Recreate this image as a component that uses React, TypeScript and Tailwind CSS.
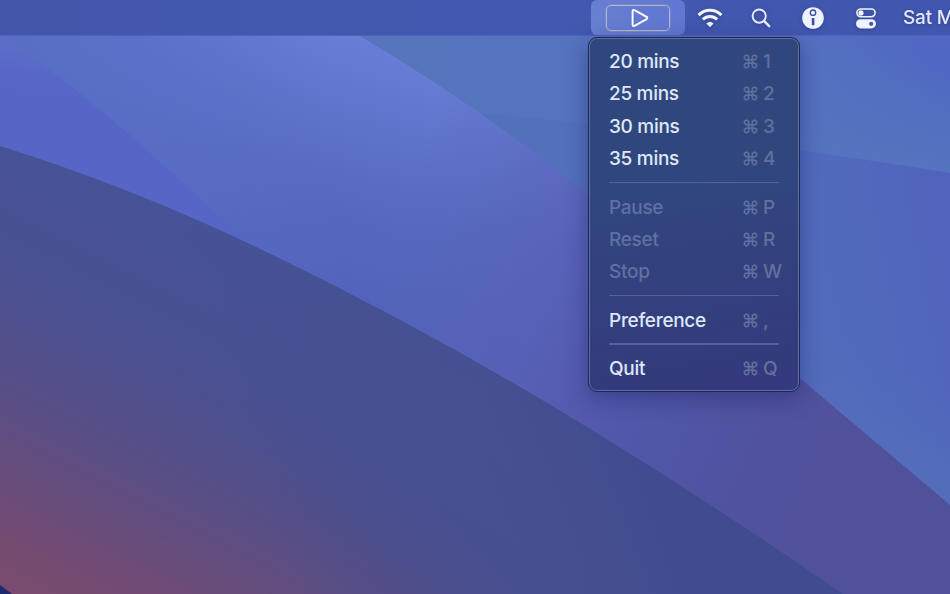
import React from "react";

type Item = { label: string; shortcut: string; disabled?: boolean };

const groups: Item[][] = [
  [
    { label: "20 mins", shortcut: "1" },
    { label: "25 mins", shortcut: "2" },
    { label: "30 mins", shortcut: "3" },
    { label: "35 mins", shortcut: "4" },
  ],
  [
    { label: "Pause", shortcut: "P", disabled: true },
    { label: "Reset", shortcut: "R", disabled: true },
    { label: "Stop", shortcut: "W", disabled: true },
  ],
  [{ label: "Preference", shortcut: "," }],
  [{ label: "Quit", shortcut: "Q" }],
];

const slope = "M0 0H300L358 35Q440 83 520 142Q600 199 802 380L950 505V594H0Z";
const ridge = "M0 146Q125 185 250 244Q430 330 600 435Q720 509 843 594H0Z";

function Wallpaper() {
  return (
    <svg className="absolute inset-0" width="950" height="594" viewBox="0 0 950 594" aria-hidden="true">
      <defs>
        <linearGradient id="sky" gradientUnits="userSpaceOnUse" x1="400" y1="60" x2="950" y2="60">
          <stop offset="0" stopColor="#5675bc" />
          <stop offset="0.7" stopColor="#5571c0" />
          <stop offset="1" stopColor="#5067c4" />
        </linearGradient>
        <linearGradient id="skyFade" gradientUnits="userSpaceOnUse" x1="900" y1="50" x2="885" y2="165">
          <stop offset="0" stopColor="#5573be" stopOpacity="0" />
          <stop offset="1" stopColor="#5573be" />
        </linearGradient>
        <linearGradient id="right" gradientUnits="userSpaceOnUse" x1="790" y1="330" x2="950" y2="300">
          <stop offset="0" stopColor="#536dbc" />
          <stop offset="0.5" stopColor="#5169bd" />
          <stop offset="1" stopColor="#5164bd" />
        </linearGradient>
        <linearGradient id="rightTop" gradientUnits="userSpaceOnUse" x1="560" y1="120" x2="760" y2="150">
          <stop offset="0" stopColor="#5370bb" />
          <stop offset="1" stopColor="#5370bb" stopOpacity="0" />
        </linearGradient>
        <linearGradient id="rightLow" gradientUnits="userSpaceOnUse" x1="930" y1="380" x2="890" y2="450">
          <stop offset="0" stopColor="#536dbb" stopOpacity="0" />
          <stop offset="1" stopColor="#536dbb" />
        </linearGradient>
        <linearGradient id="mid" gradientUnits="userSpaceOnUse" x1="350" y1="20" x2="270" y2="270">
          <stop offset="0" stopColor="#6a80d8" />
          <stop offset="0.25" stopColor="#6277cf" />
          <stop offset="0.6" stopColor="#576bc3" />
          <stop offset="1" stopColor="#5263bb" />
        </linearGradient>
        <linearGradient id="midLeft" gradientUnits="userSpaceOnUse" x1="0" y1="100" x2="320" y2="60">
          <stop offset="0" stopColor="#586dc3" />
          <stop offset="0.4" stopColor="#596ec6" stopOpacity="0.7" />
          <stop offset="1" stopColor="#5b70c9" stopOpacity="0" />
        </linearGradient>
        <linearGradient id="midRight" gradientUnits="userSpaceOnUse" x1="380" y1="240" x2="850" y2="440">
          <stop offset="0" stopColor="#5963b8" stopOpacity="0" />
          <stop offset="0.33" stopColor="#5760b5" stopOpacity="0.7" />
          <stop offset="0.5" stopColor="#5459ad" />
          <stop offset="0.72" stopColor="#5054a3" />
          <stop offset="1" stopColor="#51509b" />
        </linearGradient>
        <linearGradient id="wedge" gradientUnits="userSpaceOnUse" x1="20" y1="36" x2="10" y2="110">
          <stop offset="0" stopColor="#5b70c8" />
          <stop offset="0.5" stopColor="#5867c7" />
          <stop offset="1" stopColor="#5765c6" />
        </linearGradient>
        <linearGradient id="ridge" gradientUnits="userSpaceOnUse" x1="40" y1="610" x2="250" y2="200">
          <stop offset="0" stopColor="#7b4b6d" />
          <stop offset="0.13" stopColor="#724b73" />
          <stop offset="0.27" stopColor="#634d7e" />
          <stop offset="0.45" stopColor="#534f8a" />
          <stop offset="0.65" stopColor="#4a5194" />
          <stop offset="1" stopColor="#465398" />
        </linearGradient>
        <linearGradient id="ridgeRight" gradientUnits="userSpaceOnUse" x1="300" y1="600" x2="650" y2="480">
          <stop offset="0" stopColor="#444f91" stopOpacity="0" />
          <stop offset="0.65" stopColor="#454f91" stopOpacity="0.8" />
          <stop offset="1" stopColor="#414c90" />
        </linearGradient>
      </defs>
      <rect width="950" height="594" fill="url(#sky)" />
      <path d="M700 0H950V173Q870 160 700 140Z" fill="url(#skyFade)" />
      <path d="M470 112Q720 136 950 173V594H700Z" fill="url(#right)" />
      <path d="M470 112Q720 136 950 173V400H700Z" fill="url(#rightTop)" />
      <path d="M790 330H950V520H860Z" fill="url(#rightLow)" />
      <path d={slope} fill="url(#mid)" />
      <path d={slope} fill="url(#midLeft)" />
      <path d={slope} fill="url(#midRight)" />
      <path d="M0 32L50 70Q142 140 256 252L0 180Z" fill="url(#wedge)" />
      <path d={ridge} fill="url(#ridge)" />
      <path d={ridge} fill="url(#ridgeRight)" />
      <path d="M0 585L12 594H0Z" fill="#1d2a70" />
    </svg>
  );
}

function PlayIcon() {
  return (
    <svg width="18" height="20" viewBox="0 0 18 20" fill="none" stroke="#fff" strokeWidth="1.9" strokeLinejoin="round">
      <path d="M1.6 3.2V16.8C1.6 18 2.5 18.4 3.5 17.8L15.6 11.1C16.5 10.5 16.5 9.5 15.6 8.9L3.5 2.2C2.5 1.6 1.6 2 1.6 3.2Z" />
    </svg>
  );
}

function WifiIcon() {
  return (
    <svg width="26" height="20" viewBox="0 0 26 20" fill="none" stroke="#f1f4ff">
      <path d="M1.6 7.1C8.1 .7 17.9 .7 24.4 7.1" strokeWidth="3.1" />
      <path d="M5.8 11.4C9.9 7.5 16.1 7.5 20.2 11.4" strokeWidth="3" />
      <path d="M13 19.2L9.4 15.6C11.3 13.3 14.7 13.3 16.6 15.6Z" fill="#f1f4ff" stroke="none" />
    </svg>
  );
}

function SearchIcon() {
  return (
    <svg width="20" height="20" viewBox="0 0 20 20" fill="none" stroke="#e9edff" strokeLinecap="round">
      <circle cx="8.2" cy="8.1" r="6.6" strokeWidth="1.9" />
      <path d="M13.2 13.2L18.2 18.2" strokeWidth="2.5" />
    </svg>
  );
}

function InfoIcon() {
  return (
    <svg width="22" height="22" viewBox="0 0 22 22">
      <circle cx="11" cy="11" r="10.8" fill="#eff2ff" />
      <circle cx="11" cy="5.7" r="2.7" fill="none" stroke="#3e509f" strokeWidth="1.4" />
      <rect x="9.8" y="11" width="2.6" height="7.2" rx="0.5" fill="#3e509f" />
    </svg>
  );
}

function ControlCenterIcon() {
  return (
    <svg width="22" height="22" viewBox="0 0 22 22">
      <rect x="1.9" y="2" width="18.2" height="7.7" rx="3.85" fill="none" stroke="#eff2ff" strokeWidth="1.6" />
      <circle cx="6" cy="5.9" r="2.6" fill="#eff2ff" />
      <rect x="1" y="12.2" width="20" height="9.2" rx="4.6" fill="#eff2ff" />
      <circle cx="16.2" cy="16.8" r="2.1" fill="#4255a8" />
    </svg>
  );
}

function MenuBar() {
  return (
    <header className="relative flex h-9 overflow-hidden border-b border-[#4e63bc] bg-linear-to-r from-[#4256ac] via-[#4359b1] to-[#4156ae] pl-[591px]">
      <div className="flex h-[35px] w-[94px] shrink-0 items-center justify-center rounded-md bg-linear-to-r from-[#687fd2] to-[#6076d1] pt-px">
        <div className="flex h-[26px] w-16 items-center justify-center rounded-[5px] border border-[#b3b5c8] pl-[3px] ring-1 ring-[#a8abc5]/30">
          <PlayIcon />
        </div>
      </div>
      <div className="ml-3 flex h-9 shrink-0 items-center drop-shadow-[0_1px_2px_rgba(20,30,90,0.35)]">
        <WifiIcon />
        <span className="ml-7"><SearchIcon /></span>
        <span className="ml-[31px]"><InfoIcon /></span>
        <span className="ml-[31px]"><ControlCenterIcon /></span>
        <span className="ml-[26px] text-[19px] leading-6 font-medium tracking-[-0.2px] whitespace-nowrap text-[#e3e8fc]">Sat M</span>
      </div>
    </header>
  );
}

function MenuRow({ label, shortcut, disabled }: Item) {
  return (
    <li className="flex h-[32.4px] items-center">
      <span
        className={
          disabled
            ? "w-[132.5px] font-medium text-[#6070a4]"
            : "w-[132.5px] font-medium text-[#dfe7f9]"
        }
      >
        {label}
      </span>
      <span className="flex font-medium text-[#61709f]">
        <span className="w-[21.5px] text-[18px]">⌘</span>
        <span>{shortcut}</span>
      </span>
    </li>
  );
}

export default function App() {
  return (
    <main className="relative h-[594px] w-[950px] overflow-hidden bg-[#5063bb] font-['Inter','Noto_Sans',sans-serif]">
      <Wallpaper />
      <MenuBar />
      <nav className="absolute top-[37px] left-[588px] h-[354.5px] w-[212px] rounded-[9px] border border-[#1c2856] bg-[linear-gradient(170deg,#30477e_0%,#30477e_38%,#33407e_68%,#343a7d_95%)] pt-[7.6px] pl-5 text-[19px] leading-6 tracking-[-0.3px] shadow-[inset_0_0_0_1px_#5d6f9f,0_6px_22px_rgba(20,25,90,0.4)]">
        {groups.map((group, index) => (
          <React.Fragment key={index}>
            {index > 0 && (
              <div className="h-[16.2px] w-[170px] pt-[6.4px]">
                <div className="h-[1.5px] w-full bg-[#50619b]" />
              </div>
            )}
            <ul>
              {group.map((item) => (
                <MenuRow key={item.label} {...item} />
              ))}
            </ul>
          </React.Fragment>
        ))}
      </nav>
    </main>
  );
}
